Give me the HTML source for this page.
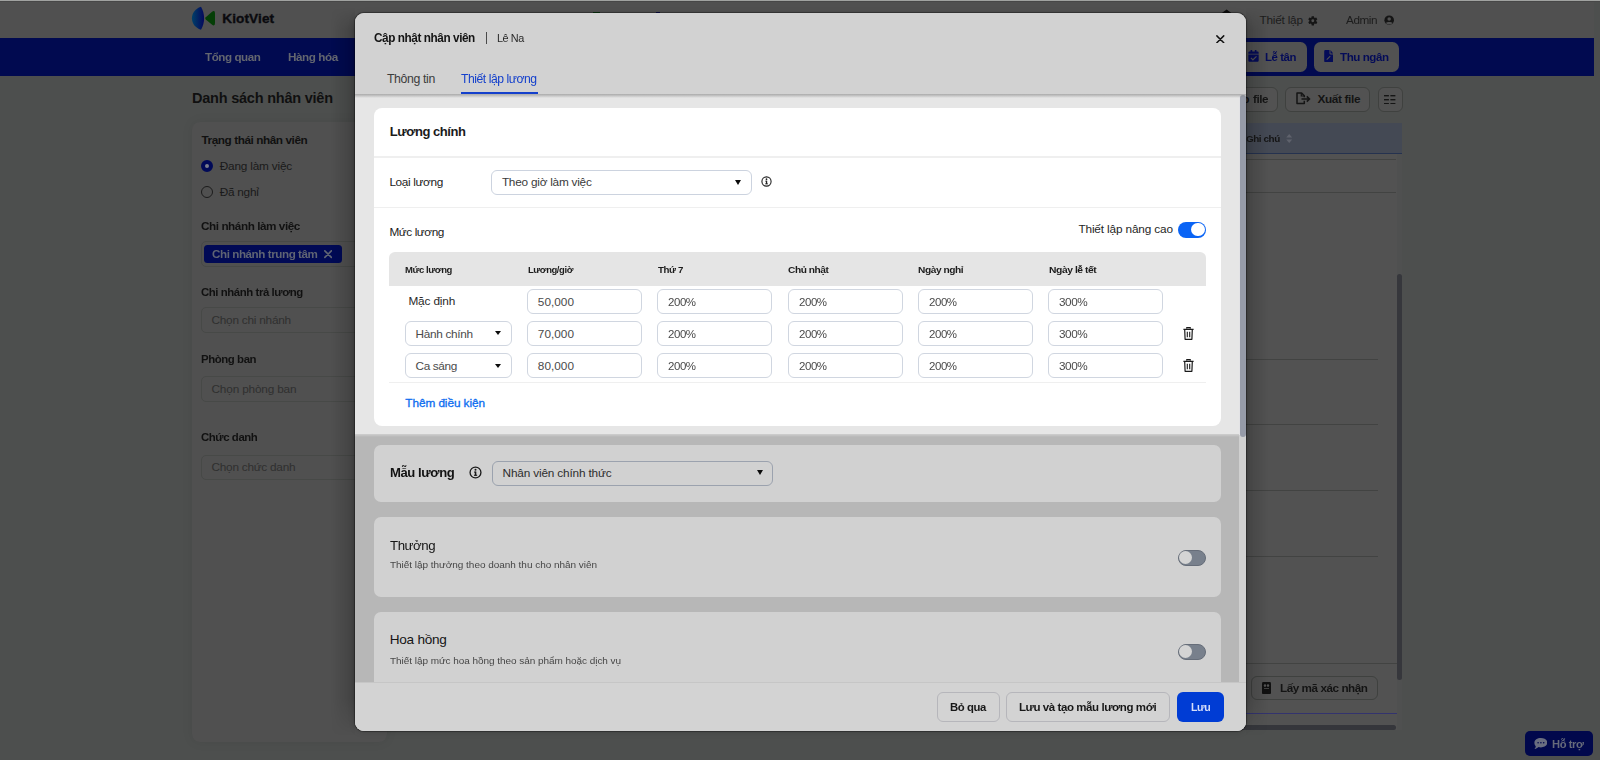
<!DOCTYPE html>
<html lang="vi"><head><meta charset="utf-8"><title>KiotViet - Cập nhật nhân viên</title>
<style>
*{box-sizing:border-box;margin:0;padding:0}
html,body{width:1600px;height:760px;overflow:hidden}
body{background:#4d4f4e;font-family:"Liberation Sans",sans-serif;font-size:12px;color:#111;position:relative}
.a{position:absolute}
.t{position:absolute;white-space:nowrap;line-height:1;transform-origin:0 50%}
.bb{position:absolute;border:1px solid #3f413f;border-radius:6px;background:#525252}
.sin{position:absolute;left:201px;width:175px;height:25px;border:1px solid #474947;border-radius:5px}
.inp{position:absolute;width:115px;height:24.5px;border:1px solid #d0d6e0;border-radius:6px;background:#fff}
.tri{position:absolute;width:0;height:0;border-left:3.5px solid transparent;border-right:3.5px solid transparent;border-top:5.3px solid #0c0c0c}
.card{position:absolute;left:374px;width:847px;border-radius:7px;background:#d1d1d1}
.hl{position:absolute;height:1px;background:#424342}
.tog{position:absolute;left:1177.6px;width:28.4px;height:16px;border-radius:8px}
</style></head><body>
<!-- ===== page behind the dialog (dimmed) ===== -->
<div class="a" style="left:0;top:0;width:1594px;height:38.400px;background:#505050"></div>
<div class="a" style="left:0;top:0;width:1600px;height:1px;background:#a0a2a0"></div>
<div class="a" style="left:0;top:1px;width:1600px;height:1px;background:#474747"></div>
<div class="a" style="left:0;top:38.4px;width:1594px;height:37.2px;background:#010a50"></div>
<!-- logo -->
<svg class="a" style="left:190px;top:5px" width="28" height="27" viewBox="0 0 28 27">
 <defs><linearGradient id="lg" x1="0" y1="0" x2="1" y2="0"><stop offset="0" stop-color="#004068"/><stop offset="1" stop-color="#04085c"/></linearGradient></defs>
 <path d="M11 1.800 C5 3.600 1.900 8.500 1.900 13.300 C1.900 18.100 5 23 11 24.800 C13 21.500 14.100 17.300 14.100 13.300 C14.100 9.300 13 5.100 11 1.800Z" fill="url(#lg)"/>
 <path d="M15.800 12.300 L21.800 7 Q25 4.600 25 8.500 L25 18 Q25 21.900 21.800 19.500 L15.800 14.500 Q14.600 13.400 15.800 12.300Z" fill="#043e06"/>
</svg>
<!-- gear -->
<svg class="a" style="left:1307px;top:15.200px" width="11.600" height="11.600" viewBox="0 0 24 24"><path fill="#151515" d="M19.140 12.940c.040-.300.060-.610.060-.940s-.020-.640-.070-.940l2.030-1.580a.490.490 0 0 0 .120-.610l-1.920-3.320a.488.488 0 0 0-.590-.220l-2.390.960c-.500-.380-1.030-.700-1.620-.940l-.360-2.540a.484.484 0 0 0-.480-.410h-3.840c-.240 0-.430.170-.470.410l-.360 2.540c-.590.240-1.130.570-1.620.940l-2.390-.960c-.220-.080-.470 0-.590.220L2.740 8.870c-.120.210-.080.470.120.610l2.030 1.580c-.050.300-.090.630-.090.940s.020.640.070.940l-2.030 1.580a.490.490 0 0 0-.120.610l1.920 3.320c.120.220.370.290.590.220l2.390-.960c.500.380 1.030.700 1.620.940l.360 2.540c.050.240.240.410.480.410h3.840c.240 0 .440-.170.470-.410l.360-2.540c.590-.240 1.130-.560 1.620-.940l2.390.960c.220.080.470 0 .590-.220l1.920-3.320c.120-.220.070-.470-.120-.610l-2.010-1.580zM12 15A3 3 0 1 1 12 9a3 3 0 0 1 0 6z"/></svg>
<!-- user -->
<svg class="a" style="left:1384.300px;top:14.700px" width="10.400" height="10.400" viewBox="0 0 20 20"><circle cx="10" cy="10" r="9.200" fill="#151515"/><circle cx="10" cy="7.600" r="3.400" fill="#505050"/><path d="M3.800 15.400 C5.200 12.600 14.800 12.600 16.200 15.400 C14.800 17.400 12.500 18.400 10 18.400 C7.500 18.400 5.200 17.400 3.800 15.400Z" fill="#505050"/></svg>
<!-- nav buttons -->
<div class="a" style="left:1230px;top:42px;width:77px;height:30px;border-radius:6.500px;background:#525252"></div>
<div class="a" style="left:1314px;top:42px;width:84.700px;height:30px;border-radius:6.500px;background:#525252"></div>
<svg class="a" style="left:1247.800px;top:50.200px" width="11" height="11.800" viewBox="0 0 14 16"><path fill="#050c58" fill-rule="evenodd" d="M3 0h2.200v2h3.600V0H11v2h1.500A1.500 1.500 0 0 1 14 3.500V5H0V3.500A1.500 1.500 0 0 1 1.500 2H3zM0 6.200h14v8.300a1.500 1.500 0 0 1-1.500 1.500h-11A1.500 1.500 0 0 1 0 14.500zM10.500 8 6.200 12.300 4 10.100 2.900 11.200l3.300 3.300 5.400-5.400z"/></svg>
<svg class="a" style="left:1323.500px;top:49.900px" width="9.500" height="12.100" viewBox="0 0 12 16"><path fill="#050c58" d="M1.500 0H7v4.500A1.500 1.500 0 0 0 8.500 6H12v8.500A1.500 1.500 0 0 1 10.500 16h-9A1.500 1.500 0 0 1 0 14.500v-13A1.500 1.500 0 0 1 1.500 0zM8.300 0 12 4.700H8.800a.5.500 0 0 1-.5-.5zM3 13l1.200-.2 4.300-4.300-1-1-4.300 4.300z"/></svg>
<!-- sidebar -->
<div class="a" style="left:192px;top:122.300px;width:194.600px;height:620px;background:#505050;border-radius:8px;box-shadow:0 0 12px rgba(0,0,0,.07)"></div>
<div class="a" style="left:201.300px;top:160.100px;width:12px;height:12px;border-radius:50%;border:4px solid #010a58;background:#7b7e8c"></div>
<div class="a" style="left:201.300px;top:186.200px;width:12px;height:12px;border-radius:50%;border:1.200px solid #1c1c1c"></div>
<div class="sin" style="top:241px;height:26px"></div>
<div class="a" style="left:204.400px;top:244.800px;width:137.200px;height:18.400px;background:#010a55;border-radius:3.500px"></div>
<svg class="a" style="left:324px;top:250.400px" width="8.200" height="8.200" viewBox="0 0 10 10"><path d="M1 1 L9 9 M9 1 L1 9" stroke="#5f6473" stroke-width="2" stroke-linecap="round" fill="none"/></svg>
<div class="sin" style="top:307px;height:26px"></div>
<div class="sin" style="top:376px;height:26px"></div>
<div class="sin" style="top:455px;height:25px"></div>
<!-- right side widgets -->
<div class="bb" style="left:1225px;top:87px;width:53px;height:24.800px"></div>
<div class="bb" style="left:1285.300px;top:87px;width:85.200px;height:24.800px"></div>
<div class="bb" style="left:1377.500px;top:87px;width:25px;height:24.800px"></div>
<svg class="a" style="left:1295.500px;top:92.300px" width="15" height="13" viewBox="0 0 15 13"><path d="M8.300 8.800 V11.600 H1 V1 H5.600 L8.300 3.700 V5.200" fill="none" stroke="#151515" stroke-width="1.500" stroke-linejoin="round"/><path d="M5.300 1 V4 H8.300" fill="none" stroke="#151515" stroke-width="1.200"/><path d="M5.500 7 H13.200 M10.800 4.400 L13.500 7 L10.800 9.600" fill="none" stroke="#151515" stroke-width="1.500"/></svg>
<svg class="a" style="left:1384.200px;top:94.500px" width="11.400" height="9.800" viewBox="0 0 11.400 9.800"><g fill="#151515"><rect x="0" y="0" width="4.900" height="1.400"/><rect x="6.400" y="0" width="5" height="1.400"/><rect x="0" y="4" width="4.900" height="1.400"/><rect x="6.400" y="4" width="5" height="1.400"/><rect x="0" y="8" width="4.900" height="1.400"/><rect x="6.400" y="8" width="5" height="1.400"/></g></svg>
<div class="a" style="left:1240px;top:153px;width:157px;height:577px;background:#525252"></div>
<div class="a" style="left:1240px;top:122.500px;width:162px;height:31px;background:#444954;border-bottom:1px solid #25324f"></div>
<svg class="a" style="left:1285.600px;top:133.500px" width="6.400" height="9" viewBox="0 0 6.400 9"><path d="M3.200 0 L6.200 3.600 H.2Z M3.200 9 L6.200 5.400 H.2Z" fill="#5f626c"/></svg>
<div class="hl" style="left:1240px;top:159px;width:156px"></div>
<div class="hl" style="left:1240px;top:192px;width:156px"></div>
<div class="hl" style="left:1240px;top:359px;width:138px"></div>
<div class="hl" style="left:1240px;top:424px;width:138px"></div>
<div class="hl" style="left:1240px;top:490px;width:138px"></div>
<div class="hl" style="left:1240px;top:556px;width:138px"></div>
<div class="hl" style="left:1240px;top:662.500px;width:157px"></div>
<div class="a" style="left:1397px;top:274px;width:5px;height:406px;background:#36373c;border-radius:2.500px"></div>
<div class="a" style="left:1397px;top:153px;width:5px;height:577px;background:rgba(82,82,82,.6);z-index:-1"></div>
<div class="a" style="left:1240px;top:713px;width:157px;height:1px;background:#33336e"></div>
<div class="a" style="left:1240px;top:724.500px;width:155.700px;height:5.800px;background:#35363b;border-radius:0 3px 3px 0"></div>
<div class="bb" style="left:1251.200px;top:676.200px;width:126.800px;height:24.300px"></div>
<svg class="a" style="left:1262.400px;top:682px" width="9" height="12.200" viewBox="0 0 10 12.200" preserveAspectRatio="none"><rect x="0" y="0" width="10" height="12.200" rx="1.500" fill="#111"/><circle cx="3.300" cy="3.600" r="1.300" fill="#555"/><circle cx="6.700" cy="3.600" r="1.300" fill="#555"/><rect x="2.200" y="6" width="5.600" height="1" fill="#444"/></svg>
<div class="a" style="left:1525px;top:730.900px;width:68.200px;height:24.800px;background:#01084c;border-radius:5px"></div>
<svg class="a" style="left:1533.800px;top:737.800px" width="13.400" height="11.400" viewBox="0 0 13.400 11.400"><path d="M6.900 0 C10.500 0 13.400 2.100 13.400 4.700 C13.400 7.300 10.500 9.400 6.900 9.400 C6.100 9.400 5.300 9.300 4.600 9.100 C3.600 10.100 2.200 10.900 .3 11.200 C1.200 10.300 1.700 9.300 1.800 8.200 C.9 7.300 .4 6.100 .4 4.700 C.4 2.100 3.300 0 6.900 0Z" fill="#6a6e80"/><circle cx="4.100" cy="4.800" r=".8" fill="#01084c"/><circle cx="6.900" cy="4.800" r=".8" fill="#01084c"/><circle cx="9.700" cy="4.800" r=".8" fill="#01084c"/></svg>

<div class="t" style="right:350.800px;left:auto;top:94px;font-size:11.800px;font-weight:bold;color:#141414;letter-spacing:-.3px">Nhập</div>
<div class="a" style="left:593px;top:11.600px;width:7px;height:1.200px;background:#0a3a10"></div>
<div class="a" style="left:656px;top:11.600px;width:4px;height:1.200px;background:#0a0c50"></div>
<div class="a" style="left:331px;top:8px;width:24px;height:728px;background:linear-gradient(90deg,rgba(0,0,0,0),rgba(0,0,0,.17));-webkit-mask-image:linear-gradient(180deg,transparent,#000 22px,#000 690px,transparent);mask-image:linear-gradient(180deg,transparent,#000 22px,#000 690px,transparent)"></div>
<div class="a" style="left:1246px;top:8px;width:22px;height:728px;background:linear-gradient(270deg,rgba(0,0,0,0),rgba(0,0,0,.17));-webkit-mask-image:linear-gradient(180deg,transparent,#000 22px,#000 690px,transparent);mask-image:linear-gradient(180deg,transparent,#000 22px,#000 690px,transparent)"></div>
<div class="a" style="left:354.200px;top:12.200px;width:892.600px;height:719.600px;border-radius:9.500px;border:1px solid rgba(0,0,0,.2)"></div>
<svg class="a" style="left:1221px;top:9px" width="12" height="4" viewBox="0 0 12 4"><path d="M.8 4 L5.600 .6 L10.400 4Z" fill="#0c0c0c"/></svg>
<!-- ===== dialog ===== -->
<div class="a" style="left:355px;top:13px;width:891px;height:718px;border-radius:9px;box-shadow:0 1px 7px rgba(0,0,0,.14),0 0 1.500px rgba(0,0,0,.75)"></div>
<div class="a" id="modal" style="left:355px;top:13px;width:891px;height:718px;border-radius:9px;background:#b7b7b7;overflow:hidden">
 <div class="a" style="left:0;top:0;width:891px;height:81px;background:#d2d2d2"></div>
 <div class="a" style="left:0;top:81px;width:884.300px;height:340.800px;background:#e6e6e6"></div>
 <div class="a" style="left:0;top:421px;width:884.300px;height:2.500px;background:linear-gradient(#cfcfcf,#b7b7b7)"></div>
 <div class="a" style="left:884.300px;top:81px;width:6.700px;height:341px;background:#e3e3e6"></div>
 <div class="a" style="left:884.300px;top:422px;width:6.700px;height:248px;background:#d0d0d0"></div>
 <div class="a" style="left:885px;top:82px;width:6px;height:342px;background:#969ba8;border-radius:3px"></div>
 <div class="a" style="left:0;top:81px;width:891px;height:3.500px;background:linear-gradient(rgba(120,120,120,.55),rgba(120,120,120,0))"></div>
 <div class="a" style="left:0;top:669px;width:891px;height:49px;background:#d3d3d3;border-top:1px solid #c4c4c4"></div>
</div>
<div class="a" style="left:486px;top:31.600px;width:1.200px;height:12.200px;background:#4a4a4a"></div>
<svg class="a" style="left:1216px;top:34.700px" width="8.600" height="8.600" viewBox="0 0 10 10"><path d="M1 1 L9 9 M9 1 L1 9" stroke="#111" stroke-width="1.700" stroke-linecap="round" fill="none"/></svg>
<div class="a" style="left:460.600px;top:92px;width:77.600px;height:2px;background:#1440cc"></div>
<!-- white card -->
<div class="a" style="left:374px;top:107.500px;width:847px;height:318.100px;border-radius:8px;background:#fff"></div>
<div class="a" style="left:374px;top:156.400px;width:847px;height:1.500px;background:#efefef"></div>
<div class="a" style="left:374px;top:206.900px;width:847px;height:1.500px;background:#efefef"></div>
<div class="inp" style="left:491.200px;top:170px;width:260.600px;height:24.600px;border-color:#ccd3df"></div>
<div class="tri" style="left:735.300px;top:179.600px"></div>
<svg class="a" style="left:761px;top:176.300px" width="11" height="11" viewBox="0 0 11 11"><circle cx="5.500" cy="5.500" r="4.600" fill="none" stroke="#222" stroke-width="1.100"/><rect x="4.900" y="4.700" width="1.300" height="3.400" fill="#222"/><rect x="4.300" y="4.700" width="1.400" height=".9" fill="#222"/><rect x="4.200" y="7.400" width="2.700" height=".9" fill="#222"/><circle cx="5.500" cy="3.200" r=".85" fill="#222"/></svg>
<div class="tog" style="top:221.600px;background:#0a64f5"></div>
<div class="a" style="left:1191.400px;top:223px;width:13.200px;height:13.200px;border-radius:50%;background:#fff"></div>
<div class="a" style="left:389px;top:251.700px;width:817px;height:33.900px;background:#e5e5e5;border-radius:6px 6px 0 0"></div>
<div class="inp" style="left:527.4px;top:289.3px"></div>
<div class="inp" style="left:657.3px;top:289.3px"></div>
<div class="inp" style="left:788.0px;top:289.3px"></div>
<div class="inp" style="left:918.3px;top:289.3px"></div>
<div class="inp" style="left:1048.3px;top:289.3px"></div>
<div class="inp" style="left:527.4px;top:321.2px"></div>
<div class="inp" style="left:657.3px;top:321.2px"></div>
<div class="inp" style="left:788.0px;top:321.2px"></div>
<div class="inp" style="left:918.3px;top:321.2px"></div>
<div class="inp" style="left:1048.3px;top:321.2px"></div>
<div class="inp" style="left:405.200px;top:321.2px;width:106.400px"></div>
<div class="tri" style="left:495.400px;top:331.4px;border-left-width:3.100px;border-right-width:3.100px;border-top-width:4.600px"></div>
<svg class="a" style="left:1183px;top:326.9px" width="11" height="13" viewBox="0 0 11 13"><path d="M3.700 1.600 V.6 H7.300 V1.600 M.4 2.300 H10.600 M1.700 2.600 L2.100 12.300 H8.900 L9.300 2.600" fill="none" stroke="#1a1a1a" stroke-width="1.200" stroke-linejoin="round"/><path d="M4.300 4.700 V10.200 M6.700 4.700 V10.200" stroke="#1a1a1a" stroke-width="1.100"/></svg>
<div class="inp" style="left:527.4px;top:353.3px"></div>
<div class="inp" style="left:657.3px;top:353.3px"></div>
<div class="inp" style="left:788.0px;top:353.3px"></div>
<div class="inp" style="left:918.3px;top:353.3px"></div>
<div class="inp" style="left:1048.3px;top:353.3px"></div>
<div class="inp" style="left:405.200px;top:353.3px;width:106.400px"></div>
<div class="tri" style="left:495.400px;top:363.5px;border-left-width:3.100px;border-right-width:3.100px;border-top-width:4.600px"></div>
<svg class="a" style="left:1183px;top:359.0px" width="11" height="13" viewBox="0 0 11 13"><path d="M3.700 1.600 V.6 H7.300 V1.600 M.4 2.300 H10.600 M1.700 2.600 L2.100 12.300 H8.900 L9.300 2.600" fill="none" stroke="#1a1a1a" stroke-width="1.200" stroke-linejoin="round"/><path d="M4.300 4.700 V10.200 M6.700 4.700 V10.200" stroke="#1a1a1a" stroke-width="1.100"/></svg>
<div class="a" style="left:389px;top:381.600px;width:817px;height:1.300px;background:#efefef"></div>
<!-- lower cards -->
<div class="card" style="top:445px;height:56.7px"></div>
<svg class="a" style="left:468.800px;top:465.700px" width="13" height="13" viewBox="0 0 11 11"><circle cx="5.500" cy="5.500" r="4.600" fill="none" stroke="#1a1a1a" stroke-width="1.100"/><rect x="4.900" y="4.700" width="1.300" height="3.400" fill="#1a1a1a"/><rect x="4.300" y="4.700" width="1.400" height=".9" fill="#1a1a1a"/><rect x="4.200" y="7.400" width="2.700" height=".9" fill="#1a1a1a"/><circle cx="5.500" cy="3.200" r=".85" fill="#1a1a1a"/></svg>
<div class="inp" style="left:492.2px;top:461.2px;width:280.8px;height:24.500px;background:#d1d1d1;border-color:#9ba2ae"></div>
<div class="tri" style="left:757.300px;top:470.200px"></div>
<div class="card" style="top:517.4px;height:79.2px"></div>
<div class="tog" style="top:550px;background:#78808c;border:1px solid #666d79"></div>
<div class="a" style="left:1179px;top:551.2px;width:13.2px;height:13.2px;border-radius:50%;background:#d4d4d4"></div>
<div class="card" style="top:612.300px;height:70px;border-radius:7px 7px 0 0"></div>
<div class="tog" style="top:644px;background:#78808c;border:1px solid #666d79"></div>
<div class="a" style="left:1179px;top:645.2px;width:13.2px;height:13.2px;border-radius:50%;background:#d4d4d4"></div>
<!-- footer -->
<div class="a" style="left:355px;top:682px;width:891px;height:49px;background:#d3d3d3;border-top:1px solid #c6c6c6;border-radius:0 0 9px 9px"></div>
<div class="bb" style="left:937px;top:691.600px;width:62.600px;height:30.800px;border-color:#b6b6bb;background:none"></div>
<div class="bb" style="left:1006px;top:691.600px;width:164.400px;height:30.800px;border-color:#b6b6bb;background:none"></div>
<div class="a" style="left:1177.400px;top:691.600px;width:46.600px;height:30.600px;border-radius:6px;background:#003cd4"></div>
<!-- texts -->
<div class="t" style="left:222.3px;top:12px;font-size:13.6px;color:#0a0a0e;font-weight:bold;letter-spacing:0.10px;-webkit-text-stroke:0.35px #0a0a0e;">KiotViet</div>
<div class="t" style="left:205.2px;top:52px;font-size:11.8px;color:#63666f;font-weight:bold;letter-spacing:-0.45px;transform:scale(0.986,1.000);transform-origin:0 9px;">Tổng quan</div>
<div class="t" style="left:287.9px;top:52px;font-size:11.8px;color:#63666f;font-weight:bold;letter-spacing:-0.45px;transform:scale(0.992,1.000);transform-origin:0 9px;">Hàng hóa</div>
<div class="t" style="left:1259.5px;top:15px;font-size:11.8px;color:#1c1c1c;letter-spacing:-0.22px;">Thiết lập</div>
<div class="t" style="left:1345.5px;top:15px;font-size:11.8px;color:#1c1c1c;letter-spacing:-0.45px;transform:scale(0.995,1.000);transform-origin:0 9px;">Admin</div>
<div class="t" style="left:1265.3px;top:52px;font-size:11.8px;color:#050c58;font-weight:bold;letter-spacing:-0.45px;transform:scale(0.966,1.000);transform-origin:0 9px;">Lễ tân</div>
<div class="t" style="left:1339.5px;top:52px;font-size:11.8px;color:#050c58;font-weight:bold;letter-spacing:-0.45px;transform:scale(0.981,1.000);transform-origin:0 9px;">Thu ngân</div>
<div class="t" style="left:192.0px;top:91px;font-size:14.5px;color:#101010;font-weight:bold;letter-spacing:-0.22px;">Danh sách nhân viên</div>
<div class="t" style="left:201.4px;top:135px;font-size:11.8px;color:#111111;font-weight:bold;letter-spacing:-0.44px;">Trạng thái nhân viên</div>
<div class="t" style="left:219.8px;top:161px;font-size:11.8px;color:#1a1a1a;letter-spacing:-0.20px;">Đang làm việc</div>
<div class="t" style="left:219.8px;top:187px;font-size:11.8px;color:#1a1a1a;letter-spacing:-0.28px;">Đã nghỉ</div>
<div class="t" style="left:201.3px;top:221px;font-size:11.8px;color:#111111;font-weight:bold;letter-spacing:-0.45px;transform:scale(0.995,1.000);transform-origin:0 9px;">Chi nhánh làm việc</div>
<div class="t" style="left:211.9px;top:249px;font-size:11.8px;color:#5f6473;font-weight:bold;letter-spacing:-0.45px;transform:scale(0.988,1.000);transform-origin:0 9px;">Chi nhánh trung tâm</div>
<div class="t" style="left:201.2px;top:287px;font-size:11.8px;color:#111111;font-weight:bold;letter-spacing:-0.45px;transform:scale(0.967,1.000);transform-origin:0 9px;">Chi nhánh trả lương</div>
<div class="t" style="left:211.5px;top:315px;font-size:11.8px;color:#2f2f2f;letter-spacing:-0.23px;">Chọn chi nhánh</div>
<div class="t" style="left:201.2px;top:354px;font-size:11.8px;color:#111111;font-weight:bold;letter-spacing:-0.45px;transform:scale(0.969,1.000);transform-origin:0 9px;">Phòng ban</div>
<div class="t" style="left:211.5px;top:384px;font-size:11.8px;color:#2f2f2f;letter-spacing:-0.17px;">Chọn phòng ban</div>
<div class="t" style="left:201.2px;top:432px;font-size:11.8px;color:#111111;font-weight:bold;letter-spacing:-0.45px;transform:scale(0.968,1.000);transform-origin:0 9px;">Chức danh</div>
<div class="t" style="left:211.5px;top:462px;font-size:11.8px;color:#2f2f2f;letter-spacing:-0.25px;">Chọn chức danh</div>
<div class="t" style="left:1252.5px;top:94px;font-size:11.8px;color:#141414;font-weight:bold;letter-spacing:-0.45px;transform:scale(0.987,1.000);transform-origin:0 9px;">file</div>
<div class="t" style="left:1317.5px;top:94px;font-size:11.8px;color:#141414;font-weight:bold;letter-spacing:-0.36px;">Xuất file</div>
<div class="t" style="left:1246.1px;top:134px;font-size:10px;color:#141414;font-weight:bold;letter-spacing:-0.45px;transform:scale(0.990,0.838);transform-origin:0 8px;">Ghi chú</div>
<div class="t" style="left:1279.5px;top:683px;font-size:11.8px;color:#141414;font-weight:bold;letter-spacing:-0.45px;transform:scale(0.991,1.000);transform-origin:0 9px;">Lấy mã xác nhận</div>
<div class="t" style="left:1551.9px;top:739px;font-size:11.8px;color:#666a7a;font-weight:bold;letter-spacing:-0.45px;transform:scale(0.947,1.000);transform-origin:0 9px;">Hỗ trợ</div>
<div class="t" style="left:373.8px;top:32px;font-size:12.2px;color:#141414;font-weight:bold;letter-spacing:-0.45px;transform:scale(0.967,1.000);transform-origin:0 10px;">Cập nhật nhân viên</div>
<div class="t" style="left:497.1px;top:33px;font-size:11px;color:#2a2a2a;letter-spacing:-0.45px;transform:scale(0.987,1.000);transform-origin:0 9px;">Lê Na</div>
<div class="t" style="left:386.9px;top:73px;font-size:12.3px;color:#3c3c3c;letter-spacing:-0.36px;">Thông tin</div>
<div class="t" style="left:461.3px;top:73px;font-size:12.3px;color:#1440cc;letter-spacing:-0.45px;transform:scale(0.988,1.000);transform-origin:0 10px;">Thiết lập lương</div>
<div class="t" style="left:389.7px;top:125px;font-size:13px;color:#1a1a1a;font-weight:bold;letter-spacing:-0.45px;">Lương chính</div>
<div class="t" style="left:389.4px;top:177px;font-size:11.8px;color:#1c1c1c;letter-spacing:-0.35px;">Loại lương</div>
<div class="t" style="left:501.9px;top:177px;font-size:11.8px;color:#3a3a3a;letter-spacing:-0.23px;">Theo giờ làm việc</div>
<div class="t" style="left:389.4px;top:227px;font-size:11.8px;color:#1c1c1c;letter-spacing:-0.41px;">Mức lương</div>
<div class="t" style="left:1078.4px;top:224px;font-size:11.8px;color:#262626;letter-spacing:-0.14px;">Thiết lập nâng cao</div>
<div class="t" style="left:405.3px;top:264px;font-size:10.6px;color:#1c1c1c;font-weight:bold;letter-spacing:-0.45px;transform:scale(0.897,0.938);transform-origin:0 9px;">Mức lương</div>
<div class="t" style="left:527.8px;top:264px;font-size:10.6px;color:#1c1c1c;font-weight:bold;letter-spacing:-0.45px;transform:scale(0.892,0.938);transform-origin:0 9px;">Lương/giờ</div>
<div class="t" style="left:658.2px;top:264px;font-size:10.6px;color:#1c1c1c;font-weight:bold;letter-spacing:-0.45px;transform:scale(0.915,0.938);transform-origin:0 9px;">Thứ 7</div>
<div class="t" style="left:788.1px;top:264px;font-size:10.6px;color:#1c1c1c;font-weight:bold;letter-spacing:-0.45px;transform:scale(0.957,0.938);transform-origin:0 9px;">Chủ nhật</div>
<div class="t" style="left:918.4px;top:264px;font-size:10.6px;color:#1c1c1c;font-weight:bold;letter-spacing:-0.45px;transform:scale(0.958,0.938);transform-origin:0 9px;">Ngày nghỉ</div>
<div class="t" style="left:1048.8px;top:264px;font-size:10.6px;color:#1c1c1c;font-weight:bold;letter-spacing:-0.45px;transform:scale(0.974,0.938);transform-origin:0 9px;">Ngày lễ tết</div>
<div class="t" style="left:408.4px;top:296px;font-size:11.8px;color:#2a2a2a;letter-spacing:-0.14px;">Mặc định</div>
<div class="t" style="left:537.8px;top:297px;font-size:11.8px;color:#4b4b4b;letter-spacing:0.02px;">50,000</div>
<div class="t" style="left:668.1px;top:297px;font-size:11.8px;color:#4b4b4b;letter-spacing:-0.45px;transform:scale(0.974,1.000);transform-origin:0 9px;">200%</div>
<div class="t" style="left:798.8px;top:297px;font-size:11.8px;color:#4b4b4b;letter-spacing:-0.45px;transform:scale(0.974,1.000);transform-origin:0 9px;">200%</div>
<div class="t" style="left:929.1px;top:297px;font-size:11.8px;color:#4b4b4b;letter-spacing:-0.45px;transform:scale(0.974,1.000);transform-origin:0 9px;">200%</div>
<div class="t" style="left:1059.1px;top:297px;font-size:11.8px;color:#4b4b4b;letter-spacing:-0.45px;transform:scale(0.995,1.000);transform-origin:0 9px;">300%</div>
<div class="t" style="left:537.8px;top:329px;font-size:11.8px;color:#4b4b4b;letter-spacing:0.02px;">70,000</div>
<div class="t" style="left:668.1px;top:329px;font-size:11.8px;color:#4b4b4b;letter-spacing:-0.45px;transform:scale(0.974,1.000);transform-origin:0 9px;">200%</div>
<div class="t" style="left:798.8px;top:329px;font-size:11.8px;color:#4b4b4b;letter-spacing:-0.45px;transform:scale(0.974,1.000);transform-origin:0 9px;">200%</div>
<div class="t" style="left:929.1px;top:329px;font-size:11.8px;color:#4b4b4b;letter-spacing:-0.45px;transform:scale(0.974,1.000);transform-origin:0 9px;">200%</div>
<div class="t" style="left:1059.1px;top:329px;font-size:11.8px;color:#4b4b4b;letter-spacing:-0.45px;transform:scale(0.995,1.000);transform-origin:0 9px;">300%</div>
<div class="t" style="left:537.8px;top:361px;font-size:11.8px;color:#4b4b4b;letter-spacing:0.02px;">80,000</div>
<div class="t" style="left:668.1px;top:361px;font-size:11.8px;color:#4b4b4b;letter-spacing:-0.45px;transform:scale(0.974,1.000);transform-origin:0 9px;">200%</div>
<div class="t" style="left:798.8px;top:361px;font-size:11.8px;color:#4b4b4b;letter-spacing:-0.45px;transform:scale(0.974,1.000);transform-origin:0 9px;">200%</div>
<div class="t" style="left:929.1px;top:361px;font-size:11.8px;color:#4b4b4b;letter-spacing:-0.45px;transform:scale(0.974,1.000);transform-origin:0 9px;">200%</div>
<div class="t" style="left:1059.1px;top:361px;font-size:11.8px;color:#4b4b4b;letter-spacing:-0.45px;transform:scale(0.995,1.000);transform-origin:0 9px;">300%</div>
<div class="t" style="left:415.6px;top:329px;font-size:11.8px;color:#4b4b4b;letter-spacing:-0.32px;">Hành chính</div>
<div class="t" style="left:415.6px;top:361px;font-size:11.8px;color:#4b4b4b;letter-spacing:-0.39px;">Ca sáng</div>
<div class="t" style="left:405.3px;top:398px;font-size:11.8px;color:#0b6cf0;letter-spacing:-0.07px;-webkit-text-stroke:0.3px #0b6cf0;">Thêm điều kiện</div>
<div class="t" style="left:389.7px;top:466px;font-size:13.6px;color:#131313;font-weight:bold;letter-spacing:-0.45px;transform:scale(0.962,1.000);transform-origin:0 11px;">Mẫu lương</div>
<div class="t" style="left:502.6px;top:468px;font-size:11.8px;color:#2e2e2e;letter-spacing:-0.17px;">Nhân viên chính thức</div>
<div class="t" style="left:390.0px;top:539px;font-size:13.6px;color:#151515;letter-spacing:-0.45px;transform:scale(0.975,1.000);transform-origin:0 11px;">Thưởng</div>
<div class="t" style="left:390.0px;top:560px;font-size:10px;color:#474747;letter-spacing:-0.03px;transform:scale(1.000,0.887);transform-origin:0 8px;">Thiết lập thưởng theo doanh thu cho nhân viên</div>
<div class="t" style="left:389.7px;top:633px;font-size:13.6px;color:#151515;letter-spacing:-0.25px;">Hoa hồng</div>
<div class="t" style="left:390.0px;top:656px;font-size:10px;color:#474747;letter-spacing:-0.05px;transform:scale(1.000,0.887);transform-origin:0 8px;">Thiết lập mức hoa hồng theo sản phẩm hoặc dịch vụ</div>
<div class="t" style="left:950.4px;top:702px;font-size:11.8px;color:#181818;font-weight:bold;letter-spacing:-0.45px;transform:scale(0.959,1.000);transform-origin:0 9px;">Bỏ qua</div>
<div class="t" style="left:1019.4px;top:702px;font-size:11.8px;color:#181818;font-weight:bold;letter-spacing:-0.45px;transform:scale(0.977,1.000);transform-origin:0 9px;">Lưu và tạo mẫu lương mới</div>
<div class="t" style="left:1190.6px;top:702px;font-size:11.8px;color:#d6defa;font-weight:bold;letter-spacing:-0.45px;transform:scale(0.897,1.000);transform-origin:0 9px;">Lưu</div>
</body></html>
